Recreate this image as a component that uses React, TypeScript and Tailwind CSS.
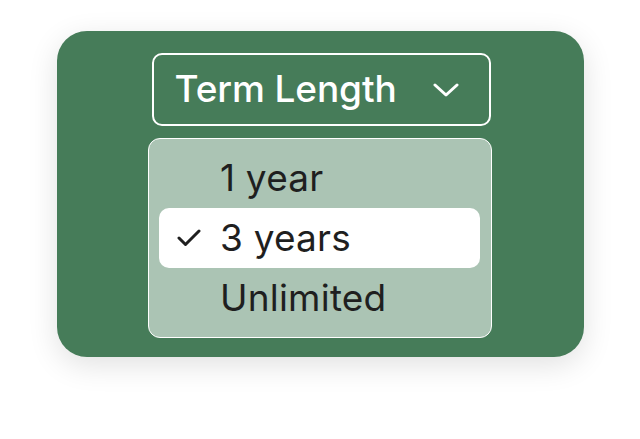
import React from "react";

export default function App() {
  const items = ["1 year", "3 years", "Unlimited"];
  return (
    <div className="w-[640px] h-[439px] bg-white flex justify-center pt-[31px]" style={{ fontFamily: "Inter, 'Noto Sans', sans-serif" }}>
      <div className="w-[527px] h-[326px] rounded-[30px] bg-[#467c59] shadow-[0_8px_30px_rgba(0,0,0,0.12)] flex flex-col items-center pt-[22px]">
        <div className="w-[339px] h-[73px] ml-[2px] border-2 border-white rounded-[10px] flex items-center pl-[21px] pr-[30px] justify-between">
          <span className="text-white text-[37px] font-medium tracking-[-0.1px] leading-none pb-[2px]">Term Length</span>
          <svg width="26" height="16" viewBox="0 0 26 16" fill="none">
            <path d="M2 3 L13 13 L24 3" stroke="white" strokeWidth="3" strokeLinecap="round" strokeLinejoin="round" />
          </svg>
        </div>
        <div className="mt-[12px] w-[344px] rounded-[12px] border-[1.5px] border-white bg-[#abc4b4] py-[9px] pl-[10px] pr-[11px] flex flex-col">
          {items.map((it, i) => (
            <div key={it} className={`h-[60px] rounded-[10px] flex items-center pl-[18px] ${i === 1 ? "bg-white" : ""}`}>
              <div className="w-[43px] flex items-center">
                {i === 1 && (
                  <svg width="24" height="18" viewBox="0 0 24 18" fill="none">
                    <path d="M2 9 L8.5 15.5 L22 2" stroke="#1f1f1f" strokeWidth="3" strokeLinecap="round" strokeLinejoin="round" />
                  </svg>
                )}
              </div>
              <span className="text-[37px] text-[#1f1f1f] leading-none tracking-[0.2px] pb-[2px]">{it}</span>
            </div>
          ))}
        </div>
      </div>
    </div>
  );
}
